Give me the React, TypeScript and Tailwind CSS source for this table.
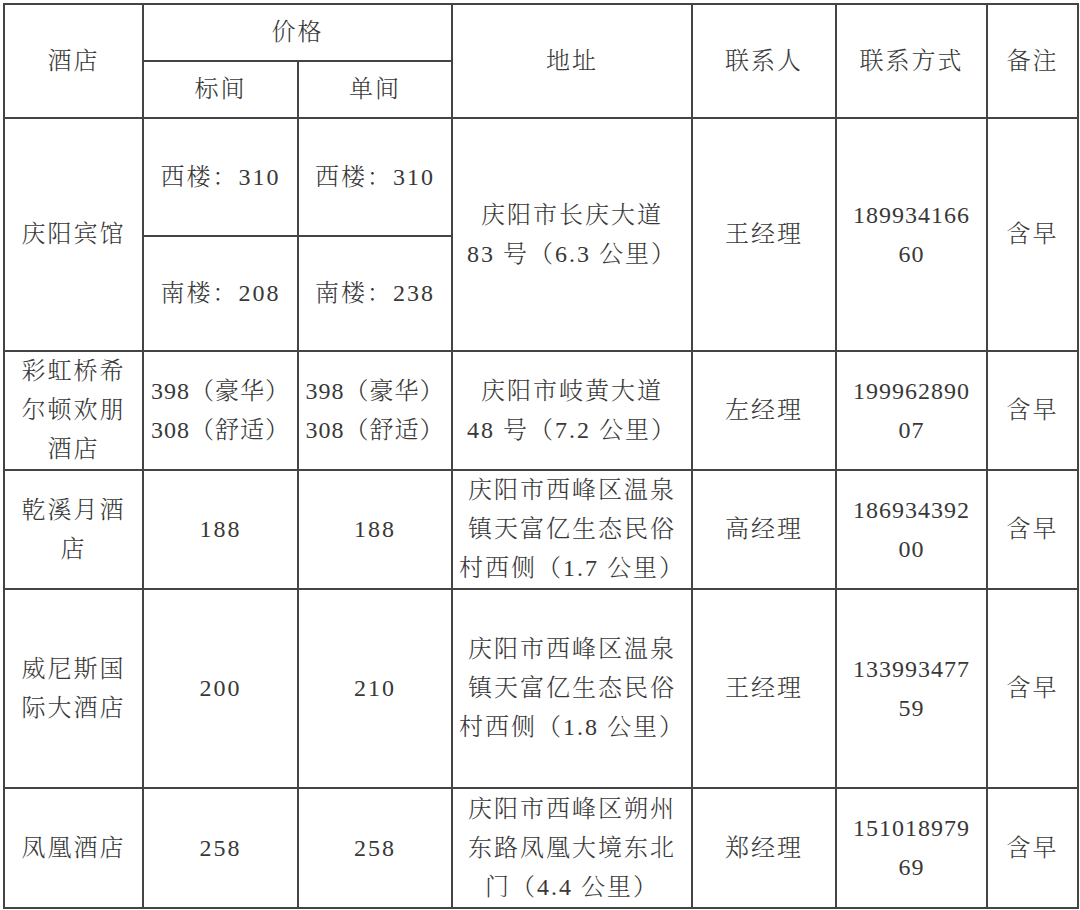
import React from "react";

type Line = string;

const cell =
  "border-2 border-[#444] text-center align-middle px-1 py-0 leading-[39px]";

function Lines({ lines, tight = false }: { lines: Line[]; tight?: boolean }) {
  return (
    <>
      {lines.map((l, i) => (
        <div key={i} className={tight ? "tracking-[1px]" : "tracking-[2px]"}>
          {l}
        </div>
      ))}
    </>
  );
}

export default function App() {
  return (
    <div
      className="min-h-screen bg-white pl-[3px] pt-[3px] text-[24px] font-light text-[#383838]"
      style={{
        fontFamily:
          '"Liberation Serif", "Noto Serif CJK SC", "Noto Sans CJK SC", serif',
      }}
    >
      <table className="w-[1074px] table-fixed border-collapse">
        <colgroup>
          <col className="w-[139px]" />
          <col className="w-[155px]" />
          <col className="w-[154px]" />
          <col className="w-[240px]" />
          <col className="w-[144px]" />
          <col className="w-[151px]" />
          <col className="w-[91px]" />
        </colgroup>
        <tbody>
          <tr className="h-[57px]">
            <td rowSpan={2} className={cell}>
              <Lines lines={["酒店"]} />
            </td>
            <td colSpan={2} className={cell}>
              <Lines lines={["价格"]} />
            </td>
            <td rowSpan={2} className={cell}>
              <Lines lines={["地址"]} />
            </td>
            <td rowSpan={2} className={cell}>
              <Lines lines={["联系人"]} />
            </td>
            <td rowSpan={2} className={cell}>
              <Lines lines={["联系方式"]} />
            </td>
            <td rowSpan={2} className={cell}>
              <Lines lines={["备注"]} />
            </td>
          </tr>
          <tr className="h-[57px]">
            <td className={cell}>
              <Lines lines={["标间"]} />
            </td>
            <td className={cell}>
              <Lines lines={["单间"]} />
            </td>
          </tr>

          <tr className="h-[118px]">
            <td rowSpan={2} className={cell}>
              <Lines lines={["庆阳宾馆"]} />
            </td>
            <td className={cell}>
              <Lines lines={["西楼：310"]} />
            </td>
            <td className={cell}>
              <Lines lines={["西楼：310"]} />
            </td>
            <td rowSpan={2} className={cell}>
              <Lines lines={["庆阳市长庆大道", "83 号（6.3 公里）"]} />
            </td>
            <td rowSpan={2} className={cell}>
              <Lines lines={["王经理"]} />
            </td>
            <td rowSpan={2} className={cell}>
              <Lines tight lines={["189934166", "60"]} />
            </td>
            <td rowSpan={2} className={cell}>
              <Lines lines={["含早"]} />
            </td>
          </tr>
          <tr className="h-[115px]">
            <td className={cell}>
              <Lines lines={["南楼：208"]} />
            </td>
            <td className={cell}>
              <Lines lines={["南楼：238"]} />
            </td>
          </tr>

          <tr className="h-[119px]">
            <td className={cell}>
              <Lines lines={["彩虹桥希", "尔顿欢朋", "酒店"]} />
            </td>
            <td className={cell}>
              <Lines tight lines={["398（豪华）", "308（舒适）"]} />
            </td>
            <td className={cell}>
              <Lines tight lines={["398（豪华）", "308（舒适）"]} />
            </td>
            <td className={cell}>
              <Lines lines={["庆阳市岐黄大道", "48 号（7.2 公里）"]} />
            </td>
            <td className={cell}>
              <Lines lines={["左经理"]} />
            </td>
            <td className={cell}>
              <Lines tight lines={["199962890", "07"]} />
            </td>
            <td className={cell}>
              <Lines lines={["含早"]} />
            </td>
          </tr>

          <tr className="h-[118px]">
            <td className={cell}>
              <Lines lines={["乾溪月酒", "店"]} />
            </td>
            <td className={cell}>
              <Lines lines={["188"]} />
            </td>
            <td className={cell}>
              <Lines lines={["188"]} />
            </td>
            <td className={cell}>
              <Lines
                lines={["庆阳市西峰区温泉", "镇天富亿生态民俗", "村西侧（1.7 公里）"]}
              />
            </td>
            <td className={cell}>
              <Lines lines={["高经理"]} />
            </td>
            <td className={cell}>
              <Lines tight lines={["186934392", "00"]} />
            </td>
            <td className={cell}>
              <Lines lines={["含早"]} />
            </td>
          </tr>

          <tr className="h-[199px]">
            <td className={cell}>
              <Lines lines={["威尼斯国", "际大酒店"]} />
            </td>
            <td className={cell}>
              <Lines lines={["200"]} />
            </td>
            <td className={cell}>
              <Lines lines={["210"]} />
            </td>
            <td className={cell}>
              <Lines
                lines={["庆阳市西峰区温泉", "镇天富亿生态民俗", "村西侧（1.8 公里）"]}
              />
            </td>
            <td className={cell}>
              <Lines lines={["王经理"]} />
            </td>
            <td className={cell}>
              <Lines tight lines={["133993477", "59"]} />
            </td>
            <td className={cell}>
              <Lines lines={["含早"]} />
            </td>
          </tr>

          <tr className="h-[120px]">
            <td className={cell}>
              <Lines lines={["凤凰酒店"]} />
            </td>
            <td className={cell}>
              <Lines lines={["258"]} />
            </td>
            <td className={cell}>
              <Lines lines={["258"]} />
            </td>
            <td className={cell}>
              <Lines
                lines={["庆阳市西峰区朔州", "东路凤凰大境东北", "门（4.4 公里）"]}
              />
            </td>
            <td className={cell}>
              <Lines lines={["郑经理"]} />
            </td>
            <td className={cell}>
              <Lines tight lines={["151018979", "69"]} />
            </td>
            <td className={cell}>
              <Lines lines={["含早"]} />
            </td>
          </tr>
        </tbody>
      </table>
    </div>
  );
}
